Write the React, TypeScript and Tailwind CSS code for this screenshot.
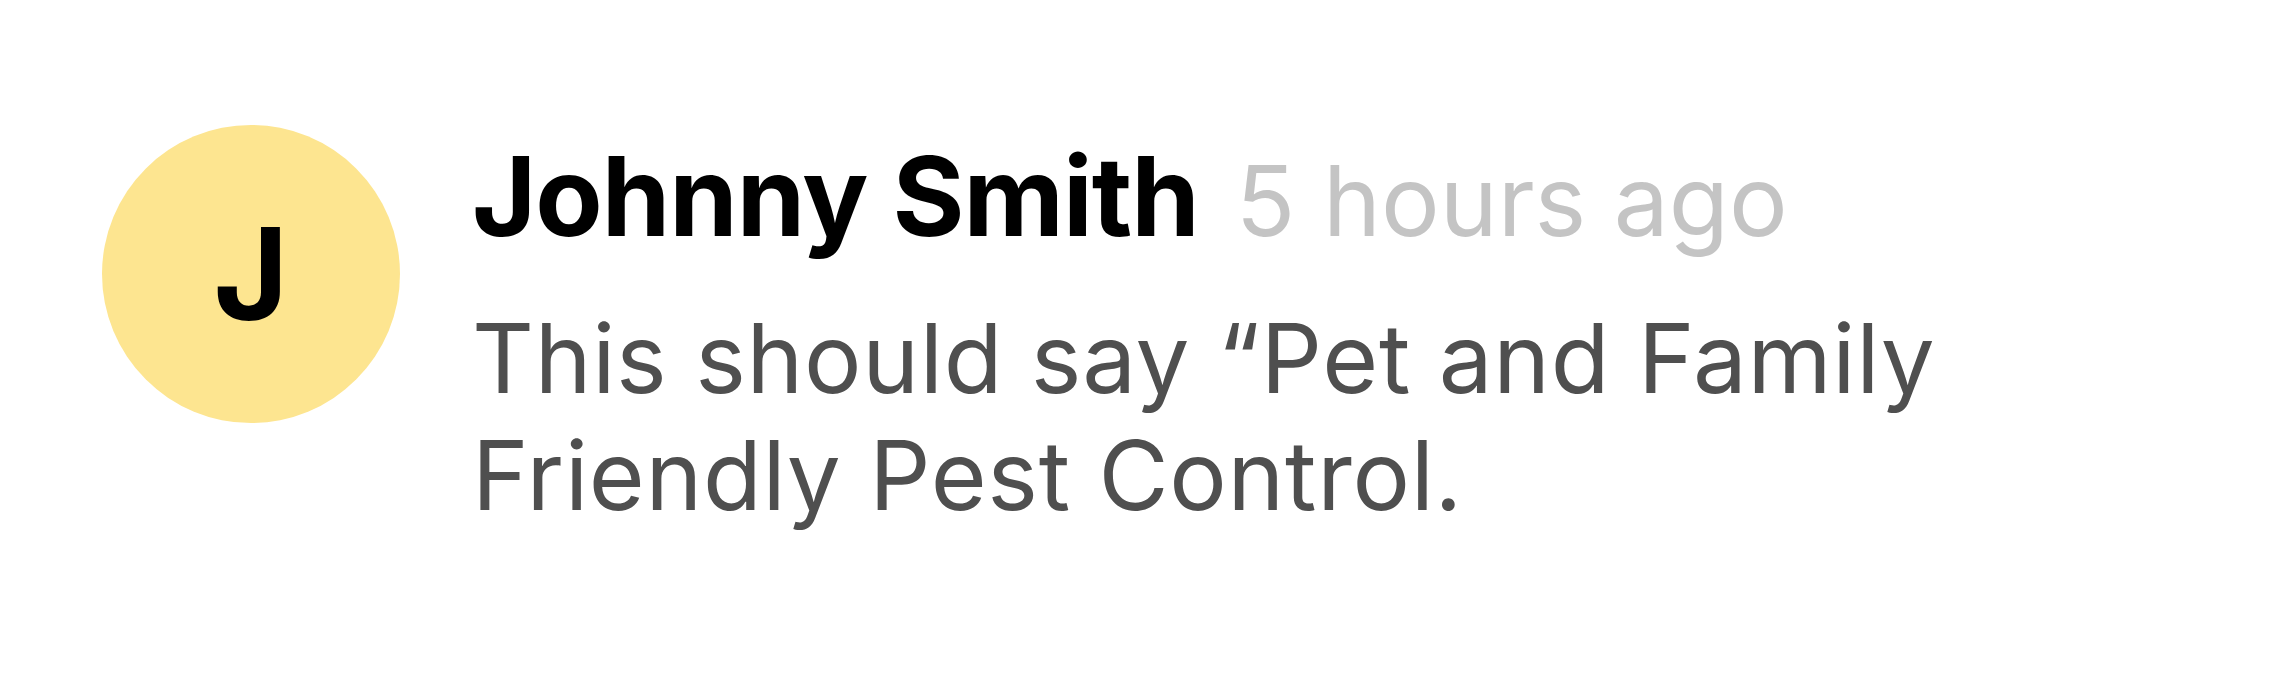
import React from 'react';

const comment = {
  author: 'Johnny Smith',
  time: '5 hours ago',
  body: 'This should say \u201cPet and Family Friendly Pest Control.',
};

export default function App() {
  return (
    <div className="min-h-[674px] w-full bg-white font-['Inter','Liberation_Sans',sans-serif]">
      <div className="flex items-start gap-[72px] pl-[102px] pt-[125px]">
        {/* avatar */}
        <div className="flex h-[298px] w-[298px] shrink-0 items-center justify-center rounded-full bg-[#fde590]">
          <span className="text-[128px] font-bold leading-none text-black">
            {comment.author.charAt(0)}
          </span>
        </div>

        <div className="flex flex-1 flex-col pt-[16px]">
          <div className="flex items-baseline gap-[37px]">
            <span className="text-[110px] font-bold leading-none tracking-[-1px] text-black">
              {comment.author}
            </span>
            <span className="text-[98px] leading-none text-[#c4c4c4]">{comment.time}</span>
          </div>
          <p className="mt-[49px] text-[96px] leading-[117px] tracking-[0.7px] text-[#4f4f4f]">
            {comment.body}
          </p>
        </div>
      </div>
    </div>
  );
}
